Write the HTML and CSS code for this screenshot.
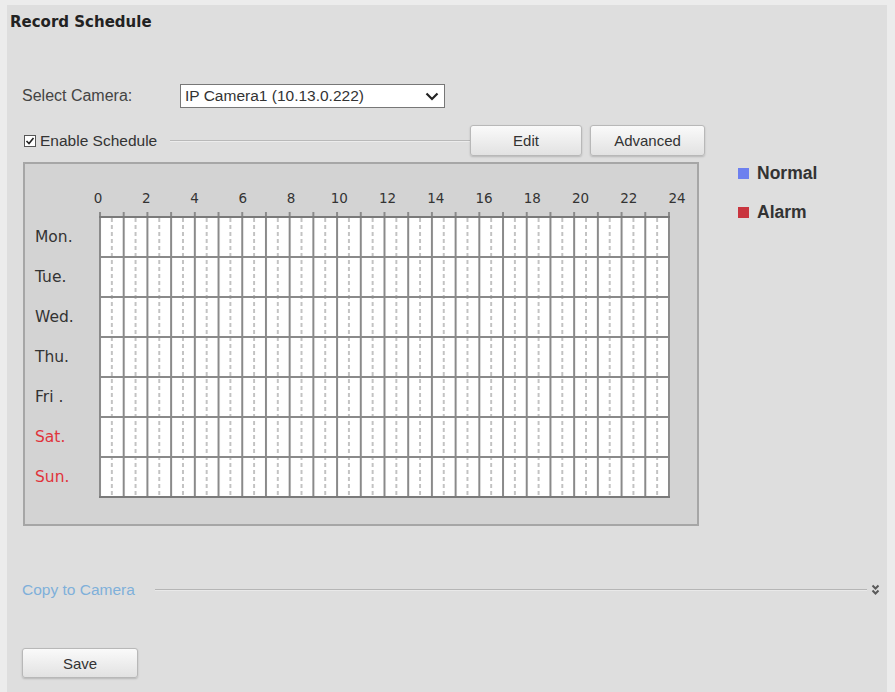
FILE: index.html
```html
<!DOCTYPE html>
<html lang="en">
<head>
<meta charset="UTF-8">
<meta name="viewport" content="width=device-width, initial-scale=1.0">
<title>Record Schedule</title>
<link rel="stylesheet" href="styles.css">
</head>
<body>
<div class="page">
<h1 class="title">Record Schedule</h1>

<div class="camera-row">
<label class="field-label">Select Camera:</label>
<div class="select">
<span>IP Camera1 (10.13.0.222)</span>
<svg class="select-arrow" width="14" height="9" viewBox="0 0 14 9"><path d="M1.5 1.5 L7 7 L12.5 1.5" fill="none" stroke="#222" stroke-width="2.2"/></svg>
</div>
</div>

<div class="enable-row">
<label class="check">
<span class="box"><svg width="10" height="10" viewBox="0 0 10 10"><path d="M1.5 5 L4 7.5 L8.5 2" fill="none" stroke="#222" stroke-width="1.6"/></svg></span>
Enable Schedule
</label>
<span class="rule"></span>
<button class="btn btn-edit">Edit</button>
<button class="btn btn-advanced">Advanced</button>
</div>

<div class="schedule-area">
<div class="panel">
<div class="hours">
<span>0</span><span>2</span><span>4</span><span>6</span><span>8</span><span>10</span><span>12</span><span>14</span><span>16</span><span>18</span><span>20</span><span>22</span><span>24</span>
</div>
<div class="chart">
<div class="days">
<div class="day">Mon.</div>
<div class="day">Tue.</div>
<div class="day">Wed.</div>
<div class="day">Thu.</div>
<div class="day">Fri .</div>
<div class="day weekend">Sat.</div>
<div class="day weekend">Sun.</div>
</div>
<svg class="timeline" width="572" height="287" viewBox="0 0 572 287">
<defs>
<pattern id="hour" width="23.708" height="287" patternUnits="userSpaceOnUse" x="0" y="0">
<rect x="0" y="5" width="23.708" height="280" fill="#fff"/>
<line x1="1" y1="0" x2="1" y2="286" stroke="#8a8a8a" stroke-width="2"/>
<line x1="12.85" y1="6" x2="12.85" y2="285" stroke="#9c9c9c" stroke-width="1.2" stroke-dasharray="4 3"/>
</pattern>
</defs>
<rect x="0" y="0" width="571" height="287" fill="url(#hour)"/>
<g stroke="#8a8a8a" stroke-width="2">
<line x1="0" y1="5" x2="571" y2="5" stroke="#7a7a7a"/>
<line x1="0" y1="45" x2="571" y2="45"/>
<line x1="0" y1="85" x2="571" y2="85"/>
<line x1="0" y1="125" x2="571" y2="125"/>
<line x1="0" y1="165" x2="571" y2="165"/>
<line x1="0" y1="205" x2="571" y2="205"/>
<line x1="0" y1="245" x2="571" y2="245"/>
<line x1="0" y1="285" x2="571" y2="285" stroke="#7a7a7a"/>
</g>
</svg>
</div>
</div>

<ul class="legend">
<li><span class="swatch swatch-normal"></span>Normal</li>
<li><span class="swatch swatch-alarm"></span>Alarm</li>
</ul>
</div>

<div class="copy-row">
<span class="copy-link">Copy to Camera</span>
<span class="copy-rule"></span>
<svg class="expand" width="9" height="12" viewBox="0 0 9 12"><path d="M1.5 1.5 L4.5 4.5 L7.5 1.5 M1.5 6.5 L4.5 9.5 L7.5 6.5" fill="none" stroke="#5a5a5a" stroke-width="2"/></svg>
</div>

<button class="btn btn-save">Save</button>
</div>
</body>
</html>
```

FILE: styles.css
```css
body {
    margin: 0;
    background-color: #ececec;
    font-family: "Liberation Sans", Arial, sans-serif;
    color: #333;
}
.page {
    margin: 5px 8px 0 7px;
    min-height: 687px;
    background-color: #dedede;
    padding-top: 7px;
    box-sizing: border-box;
}
.title {
    margin: 0 0 0 3px;
    font-family: "DejaVu Sans", Verdana, sans-serif;
    font-size: 15px;
    font-weight: bold;
    line-height: 20px;
    color: #222;
}
.camera-row {
    display: flex;
    align-items: center;
    height: 24px;
    margin-top: 52px;
    padding-left: 15px;
}
.field-label {
    width: 158px;
    font-size: 16px;
    color: #444;
}
.select {
    display: flex;
    align-items: center;
    justify-content: space-between;
    width: 265px;
    height: 24px;
    box-sizing: border-box;
    padding: 0 5px 0 4px;
    background-color: #fff;
    border: 1px solid #777;
    font-size: 15.5px;
    color: #333;
}
.enable-row {
    display: flex;
    align-items: center;
    height: 31px;
    margin-top: 17px;
    padding-left: 17px;
}
.check {
    display: flex;
    align-items: center;
    gap: 4px;
    width: 146px;
    font-size: 15.5px;
    color: #333;
}
.box {
    display: flex;
    align-items: center;
    justify-content: center;
    width: 12px;
    height: 12px;
    box-sizing: border-box;
    border: 1px solid #555;
    background-color: #fff;
}
.rule {
    width: 300px;
    height: 1px;
    background-color: #b9b9b9;
    border-bottom: 1px solid #ececec;
    margin-top: 1px;
}
.btn {
    height: 31px;
    padding: 0;
    border: 1px solid #b8b8b8;
    border-radius: 3px;
    background: linear-gradient(#fafafa, #e2e2e2);
    box-shadow: 0 1px 2px rgba(0, 0, 0, 0.18);
    font-family: "Liberation Sans", Arial, sans-serif;
    font-size: 15px;
    color: #333;
}
.btn-edit {
    width: 112px;
}
.btn-advanced {
    width: 115px;
    margin-left: 8px;
}
.schedule-area {
    display: flex;
    align-items: flex-start;
    margin-top: 6px;
    padding-left: 16px;
}
.panel {
    width: 676px;
    box-sizing: border-box;
    border: 2px solid #a6a6a6;
    background-color: #d3d3d3;
    padding: 26px 0 25px 0;
}
.hours {
    display: flex;
    padding-left: 49px;
    font-family: "DejaVu Sans", Verdana, sans-serif;
    font-size: 13.5px;
    line-height: 16px;
    color: #333;
}
.hours span {
    flex: 0 0 48.25px;
    text-align: center;
}
.chart {
    display: flex;
    margin-top: 6px;
}
.days {
    width: 74px;
    margin-top: 5px;
}
.day {
    height: 40px;
    line-height: 40px;
    padding-left: 10px;
    font-family: "DejaVu Sans", Verdana, sans-serif;
    font-size: 15.5px;
    color: #333;
}
.day.weekend {
    color: #e0333b;
}
.timeline {
    display: block;
}
.legend {
    list-style: none;
    margin: 0 0 0 39px;
    padding: 1px 0 0 0;
    display: flex;
    flex-direction: column;
    gap: 19px;
}
.legend li {
    display: flex;
    align-items: center;
    gap: 8px;
    height: 20px;
    font-size: 17.5px;
    font-weight: bold;
    color: #333;
}
.swatch {
    width: 11px;
    height: 11px;
}
.swatch-normal {
    background-color: #6d80ef;
}
.swatch-alarm {
    background-color: #c9353f;
}
.copy-row {
    display: flex;
    align-items: center;
    height: 20px;
    margin-top: 54px;
    padding-left: 15px;
    padding-right: 7px;
}
.copy-link {
    font-size: 15.5px;
    color: #7fb0da;
}
.copy-rule {
    flex: 1;
    height: 1px;
    background-color: #b5b5b5;
    border-bottom: 1px solid #e9e9e9;
    margin: 0 4px 0 20px;
}
.btn-save {
    display: block;
    width: 116px;
    height: 30px;
    margin: 48px 0 0 15px;
}
```
